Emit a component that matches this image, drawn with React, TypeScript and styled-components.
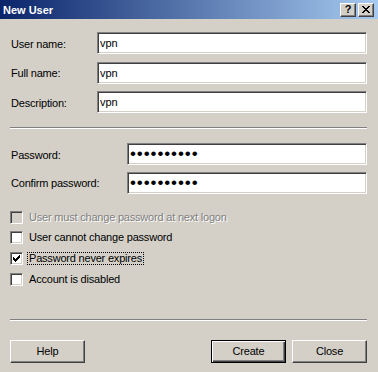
import styled, { createGlobalStyle } from "styled-components"

const face = "#d4d0c8"
const font = `"Liberation Sans", Arial, sans-serif`

const Global = createGlobalStyle`
    html, body {
        margin: 0;
        background: ${face};
    }
    * {
        box-sizing: border-box;
    }
`

const Dialog = styled.div`
    width: 378px;
    height: 372px;
    display: flex;
    flex-direction: column;
    background: ${face};
    font-family: ${font};
    font-size: 11px;
    letter-spacing: -0.2px;
    color: #000;
`
const TitleBar = styled.div`
    height: 19px;
    display: flex;
    align-items: center;
    padding: 0 4px 0 3px;
    background: linear-gradient(to right, #0a246a, #a6caf0);
`
const Title = styled.div`
    flex: 1;
    color: #fff;
    font-weight: bold;
    font-size: 11px;
    letter-spacing: 0;
    padding-top: 1px;
`
const CaptionButtons = styled.div`
    display: flex;
    gap: 2px;
`
const CaptionButton = styled.div`
    width: 16px;
    height: 14px;
    display: flex;
    align-items: center;
    justify-content: center;
    background: ${face};
    border: 1px solid;
    border-color: #fff #404040 #404040 #fff;
    box-shadow: inset -1px -1px 0 #808080;
    font-weight: bold;
    font-size: 11px;
    line-height: 1;
`
const Body = styled.div`
    flex: 1;
    display: flex;
    flex-direction: column;
    padding: 13px 11px 0 10px;
`
const FieldGroup = styled.div<{ $gap: number; $top: number }>`
    display: flex;
    flex-direction: column;
    gap: ${p => p.$gap}px;
    margin-top: ${p => p.$top}px;
`
const Row = styled.div<{ $labelWidth: number }>`
    display: grid;
    grid-template-columns: ${p => p.$labelWidth}px 1fr;
    align-items: center;
`
const Label = styled.label`
    padding-left: 1px;
    padding-top: 1px;
`
const Field = styled.input`
    width: 100%;
    height: 22px;
    margin: 0;
    padding: 0 2px;
    border: 1px solid;
    border-color: #808080 #fff #fff #808080;
    box-shadow: inset 1px 1px 0 #404040, inset -1px -1px 0 ${face};
    background: #fff;
    font-family: ${font};
    font-size: 11px;
    color: #000;
    outline: none;
`
const PasswordField = styled(Field)`
    font-size: 17px;
    letter-spacing: 0.9px;
    padding-left: 2px;
`
const Separator = styled.div<{ $top: number }>`
    margin-top: ${p => p.$top}px;
    height: 2px;
    flex: none;
    border-top: 1px solid #808080;
    border-bottom: 1px solid #fff;
`
const Checks = styled.div`
    display: flex;
    flex-direction: column;
    gap: 7.7px;
    margin-top: 17px;
`
const CheckRow = styled.div<{ $disabled?: boolean }>`
    display: flex;
    align-items: center;
    height: 13px;
    color: ${p => (p.$disabled ? "#808080" : "#000")};
    text-shadow: ${p => (p.$disabled ? "1px 1px 0 #fff" : "none")};
`
const Box = styled.div<{ $disabled?: boolean }>`
    width: 13px;
    height: 13px;
    flex: none;
    display: flex;
    align-items: center;
    justify-content: center;
    border: 1px solid;
    border-color: #808080 #fff #fff #808080;
    box-shadow: inset 1px 1px 0 #404040, inset -1px -1px 0 ${face};
    background: ${p => (p.$disabled ? face : "#fff")};
`
const CheckText = styled.span<{ $focus?: boolean }>`
    margin-left: 4px;
    padding: 0 1px 0 1px;
    height: 13px;
    line-height: 11px;
    border: 1px dotted ${p => (p.$focus ? "#000" : "transparent")};
`
const ButtonBar = styled.div`
    display: flex;
    gap: 6px;
    margin-top: 19px;
`
const Spacer = styled.div`
    flex: 1;
`
const Button = styled.button<{ $default?: boolean }>`
    width: 75px;
    height: 23px;
    margin: 0;
    padding: 0;
    background: ${face};
    font-family: ${font};
    font-size: 11px;
    letter-spacing: -0.2px;
    color: #000;
    border: 1px solid;
    border-color: ${p => (p.$default ? "#000" : "#fff #404040 #404040 #fff")};
    box-shadow: ${p =>
        p.$default
            ? "inset 1px 1px 0 #fff, inset -1px -1px 0 #404040, inset -2px -2px 0 #808080"
            : `inset -1px -1px 0 #808080, inset 1px 1px 0 ${face}`};
`

const CheckMark = () => (
    <svg width="7" height="7" viewBox="0 0 7 7" shapeRendering="crispEdges">
        <path d="M6 0h1v1h-1zM5 1h2v1h-2zM0 2h1v1h-1zM4 2h3v1h-3zM0 3h2v1h-2zM3 3h3v1h-3zM0 4h5v1h-5zM1 5h3v1h-3zM2 6h1v1h-1z" fill="#000" />
    </svg>
)

const CloseGlyph = () => (
    <svg width="8" height="7" viewBox="0 0 8 7" shapeRendering="crispEdges">
        <path d="M0 0h2v1h-2zM6 0h2v1h-2zM1 1h2v1h-2zM5 1h2v1h-2zM2 2h4v1h-4zM3 3h2v1h-2zM2 4h4v1h-4zM1 5h2v1h-2zM5 5h2v1h-2zM0 6h2v1h-2zM6 6h2v1h-2z" fill="#000" />
    </svg>
)

const options = [
    { text: "User must change password at next logon", disabled: true },
    { text: "User cannot change password" },
    { text: "Password never expires", checked: true, focus: true },
    { text: "Account is disabled" },
]

const App = () => {
    return <Dialog>
        <Global />
        <TitleBar>
            <Title>New User</Title>
            <CaptionButtons>
                <CaptionButton>?</CaptionButton>
                <CaptionButton><CloseGlyph /></CaptionButton>
            </CaptionButtons>
        </TitleBar>
        <Body>
            <FieldGroup $gap={7.5} $top={0}>
                <Row $labelWidth={87}>
                    <Label>User name:</Label>
                    <Field readOnly value="vpn" />
                </Row>
                <Row $labelWidth={87}>
                    <Label>Full name:</Label>
                    <Field readOnly value="vpn" />
                </Row>
                <Row $labelWidth={87}>
                    <Label>Description:</Label>
                    <Field readOnly value="vpn" />
                </Row>
            </FieldGroup>
            <Separator $top={14} />
            <FieldGroup $gap={6.5} $top={14}>
                <Row $labelWidth={117}>
                    <Label>Password:</Label>
                    <PasswordField type="password" readOnly value="vpnvpnvpn1" />
                </Row>
                <Row $labelWidth={117}>
                    <Label>Confirm password:</Label>
                    <PasswordField type="password" readOnly value="vpnvpnvpn1" />
                </Row>
            </FieldGroup>
            <Checks>
                {options.map(o => (
                    <CheckRow key={o.text} $disabled={o.disabled}>
                        <Box $disabled={o.disabled}>{o.checked && <CheckMark />}</Box>
                        <CheckText $focus={o.focus}>{o.text}</CheckText>
                    </CheckRow>
                ))}
            </Checks>
            <Separator $top={33} />
            <ButtonBar>
                <Button>Help</Button>
                <Spacer />
                <Button $default>Create</Button>
                <Button>Close</Button>
            </ButtonBar>
        </Body>
    </Dialog>
}

export default App
